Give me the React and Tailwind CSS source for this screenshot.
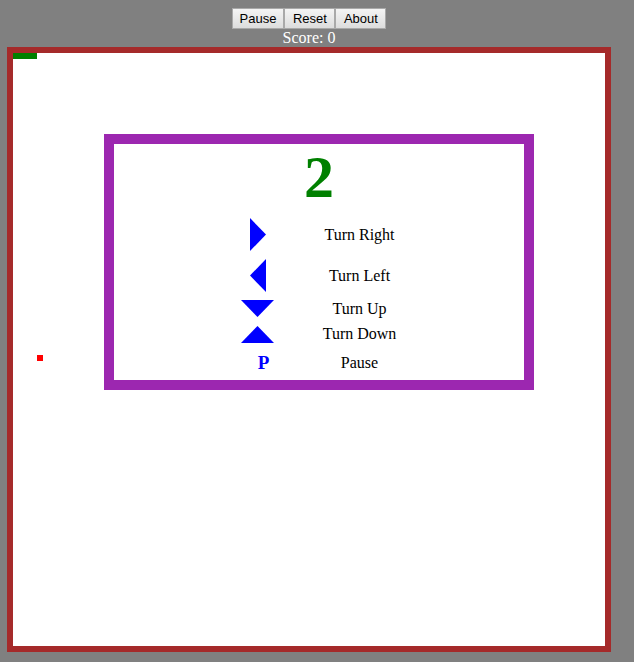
import React from "react";

const TRIANGLES = {
  right: { points: "0,0 16,16.5 0,33", width: 16, height: 33 },
  left: { points: "16,0 0,16.5 16,33", width: 16, height: 33 },
  down: { points: "0,0 33,0 16.5,17", width: 33, height: 17 },
  up: { points: "0,18 33,18 16.5,1", width: 33, height: 18 },
};

function Triangle({ direction }) {
  const { points, width, height } = TRIANGLES[direction];
  return (
    <svg width={width} height={height} viewBox={`0 0 ${width} ${height}`} aria-hidden="true">
      <polygon points={points} fill="#0000ff" />
    </svg>
  );
}

function ToolbarButton({ children }) {
  return (
    <button
      type="button"
      className="h-[21px] min-w-[51px] border border-[#a9a9a9] bg-linear-to-b from-[#f4f4f4] to-[#dddddd] px-[7px] font-['Liberation_Sans',Arial,sans-serif] text-[13px] leading-[19px] text-black"
    >
      {children}
    </button>
  );
}

function HelpRow({ icon, label }) {
  return (
    <li className="flex items-center justify-center gap-12">
      <span className="flex w-[33px] justify-center">{icon}</span>
      <span className="w-[75px] text-center text-base leading-4 whitespace-nowrap">{label}</span>
    </li>
  );
}

export default function App() {
  return (
    <main className="min-h-screen bg-[#808080] pt-2 pr-[23px] pb-2 pl-[7px] font-['Liberation_Serif','Times_New_Roman',serif] text-black">
      <div className="flex justify-center">
        <ToolbarButton>Pause</ToolbarButton>
        <ToolbarButton>Reset</ToolbarButton>
        <ToolbarButton>About</ToolbarButton>
      </div>
      <p className="text-center text-base leading-[18px] text-white">Score: 0</p>

      <section className="relative aspect-[604/605] border-6 border-[#a52a2a] bg-white">
        <div className="absolute top-0 left-0 h-1.5 w-6 bg-[#008000]" />
        <div className="absolute top-[302px] left-6 size-1.5 bg-[#ff0000]" />

        <div className="absolute top-[81px] left-[91px] w-[430px] border-10 border-[#9c27b0] bg-white pb-[5px]">
          <h1 className="pb-2 text-center text-[60px] leading-[66px] font-bold text-[#008000]">2</h1>
          <ul className="flex flex-col gap-2">
            <HelpRow icon={<Triangle direction="right" />} label="Turn Right" />
            <HelpRow icon={<Triangle direction="left" />} label="Turn Left" />
            <HelpRow icon={<Triangle direction="down" />} label="Turn Up" />
            <HelpRow icon={<Triangle direction="up" />} label="Turn Down" />
            <HelpRow
              icon={<b className="pl-3 text-[19px] leading-6 text-[#0000ff]">P</b>}
              label="Pause"
            />
          </ul>
        </div>
      </section>
    </main>
  );
}
